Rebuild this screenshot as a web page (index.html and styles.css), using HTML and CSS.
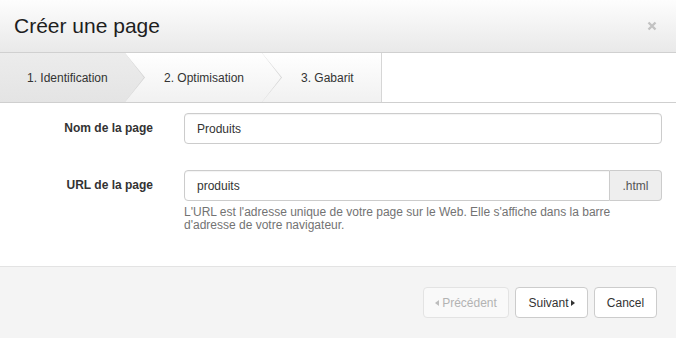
FILE: index.html
```html
<!DOCTYPE html>
<html lang="fr">
<head>
<meta charset="utf-8">
<link rel="stylesheet" href="styles.css">
</head>
<body>
<div class="modal">
  <div class="modal-header">
    <h1 class="title">Créer une page</h1>
    <span class="close"><svg width="10" height="10" viewBox="0 0 10 10"><path d="M1.5 1.5 L8.5 8.5 M8.5 1.5 L1.5 8.5" stroke="#c2c2c2" stroke-width="2.4" stroke-linecap="butt"/></svg></span>
  </div>
  <div class="steps">
    <div class="step step-active">1. Identification</div>
    <div class="step">2. Optimisation</div>
    <div class="step step-last">3. Gabarit</div>
    <div class="steps-rest"></div>
  </div>
  <div class="modal-body">
    <div class="form-row">
      <label class="label">Nom de la page</label>
      <div class="field"><input class="input" type="text" value="Produits"></div>
    </div>
    <div class="form-row form-row-url">
      <label class="label">URL de la page</label>
      <div class="field">
        <div class="input-group">
          <input class="input input-grouped" type="text" value="produits">
          <span class="addon">.html</span>
        </div>
        <p class="help">L'URL est l'adresse unique de votre page sur le Web. Elle s'affiche dans la barre d'adresse de votre navigateur.</p>
      </div>
    </div>
  </div>
  <div class="modal-footer">
    <button class="btn btn-prev btn-disabled"><span class="caret-left"></span>Précédent</button>
    <button class="btn btn-next">Suivant<span class="caret-right"></span></button>
    <button class="btn btn-cancel">Cancel</button>
  </div>
</div>
</body>
</html>
```

FILE: styles.css
```css
* { box-sizing: border-box; }
html, body { margin: 0; padding: 0; background: #fff; }
body { font-family: "Liberation Sans", Arial, sans-serif; color: #333; width: 676px; height: 338px; overflow: hidden; }

.modal { width: 676px; height: 338px; display: flex; flex-direction: column; }

.modal-header {
  height: 53px;
  display: flex; align-items: center; justify-content: space-between;
  padding: 0 19px 0 14px;
  background: linear-gradient(#fdfdfd, #e9e9e9);
  border-bottom: 1px solid #d0d0d0;
}
.title { margin: 0; font-size: 21px; font-weight: normal; color: #1e1e1e; line-height: 1; padding-bottom: 2px; }
.close { display: flex; width: 10px; height: 10px; margin-top: -1px; }

.steps {
  height: 50px; display: flex;
  border-bottom: 1px solid #cfcfcf;
  background: #fff;
}
.step {
  position: relative;
  display: flex; align-items: center;
  font-size: 12px; color: #333;
  height: 100%;
  background: linear-gradient(#ffffff, #f1f1f1);
}
.step:nth-child(1) { width: 125px; padding-left: 27px; background: linear-gradient(#ececec, #e4e4e4); z-index: 3; }
.step:nth-child(2) { width: 137px; padding-left: 39px; z-index: 2; }
.step:nth-child(3) { width: 120px; padding-left: 39px; z-index: 1; border-right: 1px solid #d6d6d6; }
.step:not(.step-last)::before, .step:not(.step-last)::after {
  content: ""; position: absolute; top: 0; left: 100%; height: 100%;
}
.step:not(.step-last)::before {
  width: 20px; background: #d2d2d2;
  clip-path: polygon(0 0, 100% 50%, 0 100%);
}
.step:not(.step-last)::after {
  width: 19px; background: inherit;
  clip-path: polygon(0 0, 100% 50%, 0 100%);
}
.steps-rest { flex: 1; background: #fff; }

.modal-body { flex: 1; padding: 10px 14px 0 0; }
.form-row { display: grid; grid-template-columns: 153px 1fr; column-gap: 31px; align-items: start; }
.form-row-url { margin-top: 26px; }
.label { font-size: 12px; font-weight: bold; text-align: right; line-height: 31px; color: #333; }
.input {
  width: 100%; height: 31px;
  border: 1px solid #cccccc; border-radius: 4px;
  padding: 0 12px; font: 12px "Liberation Sans", Arial, sans-serif; color: #333;
  box-shadow: inset 0 1px 1px rgba(0,0,0,0.05);
  background: #fff;
}
.input-group { display: flex; }
.input-grouped { border-radius: 4px 0 0 4px; flex: 1; }
.addon {
  width: 52px; height: 31px; display: flex; align-items: center; justify-content: center;
  background: #eeeeee; border: 1px solid #cccccc; border-left: none; border-radius: 0 4px 4px 0;
  font-size: 12px; color: #555;
}
.help { margin: 5px 0 0; font-size: 12px; line-height: 13px; color: #737373; padding-right: 40px; }

.modal-footer {
  height: 72px;
  border-top: 1px solid #e3e3e3;
  background: #f4f4f4;
  display: flex; justify-content: flex-end; align-items: flex-start;
  padding: 20px 19px 0 0; gap: 6px;
}
.btn {
  height: 31px; padding: 0;
  background: #fff; border: 1px solid #cccccc; border-radius: 4px;
  font: 12px "Liberation Sans", Arial, sans-serif; color: #333;
  display: inline-flex; align-items: center; justify-content: center;
}
.btn-prev { width: 86px; }
.btn-next { width: 73px; }
.btn-cancel { width: 63px; }
.btn-disabled { color: #b3b3b3; border-color: #e3e3e3; background: #f9f9f9; }
.caret-left { width: 0; height: 0; border-top: 3.5px solid transparent; border-bottom: 3.5px solid transparent; border-right: 4px solid #bdbdbd; margin-right: 3px; }
.caret-right { width: 0; height: 0; border-top: 3.5px solid transparent; border-bottom: 3.5px solid transparent; border-left: 4px solid #333; margin-left: 2px; }
```
